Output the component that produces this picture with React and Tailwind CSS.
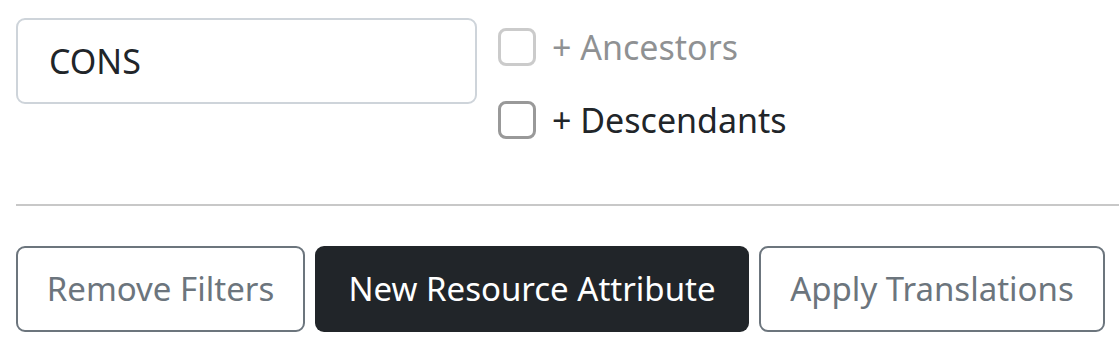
import React from 'react';

export default function App() {
  return (
    <div
      className="w-[1119px] h-[344px] bg-white overflow-hidden pl-4 pt-[18px] text-[#212529]"
      style={{ fontFamily: '"Noto Sans", "Open Sans", sans-serif' }}
    >
      {/* Filter row */}
      <div className="flex gap-[21px]">
        <div className="w-[461px] h-[86px] border-2 border-[#ced4da] rounded-[9px] flex items-center px-[31px] text-[34px]">
          CONS
        </div>

        <div className="flex flex-col gap-[35px] pt-[10px]">
          <label className="flex items-center gap-[16px] text-[34px] leading-[38px] opacity-50">
            <span className="w-[38px] h-[38px] border-[3px] border-[#999] rounded-[8px] bg-white" />
            <span>+ Ancestors</span>
          </label>
          <label className="flex items-center gap-[16px] text-[34px] leading-[38px]">
            <span className="w-[38px] h-[38px] border-[3px] border-[#999] rounded-[8px] bg-white" />
            <span>+ Descendants</span>
          </label>
        </div>
      </div>

      <hr className="mt-[65px] border-0 h-[2px] bg-[#c8c8c8]" />

      {/* Actions */}
      <div className="flex gap-[10px] mt-[40px] text-[33px]">
        <button className="w-[289px] h-[86px] border-2 border-[#6c757d] rounded-[9px] text-[#6c757d] bg-white">
          Remove Filters
        </button>
        <button className="w-[434px] h-[86px] rounded-[9px] text-white bg-[#212529]">
          New Resource Attribute
        </button>
        <button className="w-[346px] h-[86px] border-2 border-[#6c757d] rounded-[9px] text-[#6c757d] bg-white">
          Apply Translations
        </button>
      </div>
    </div>
  );
}
